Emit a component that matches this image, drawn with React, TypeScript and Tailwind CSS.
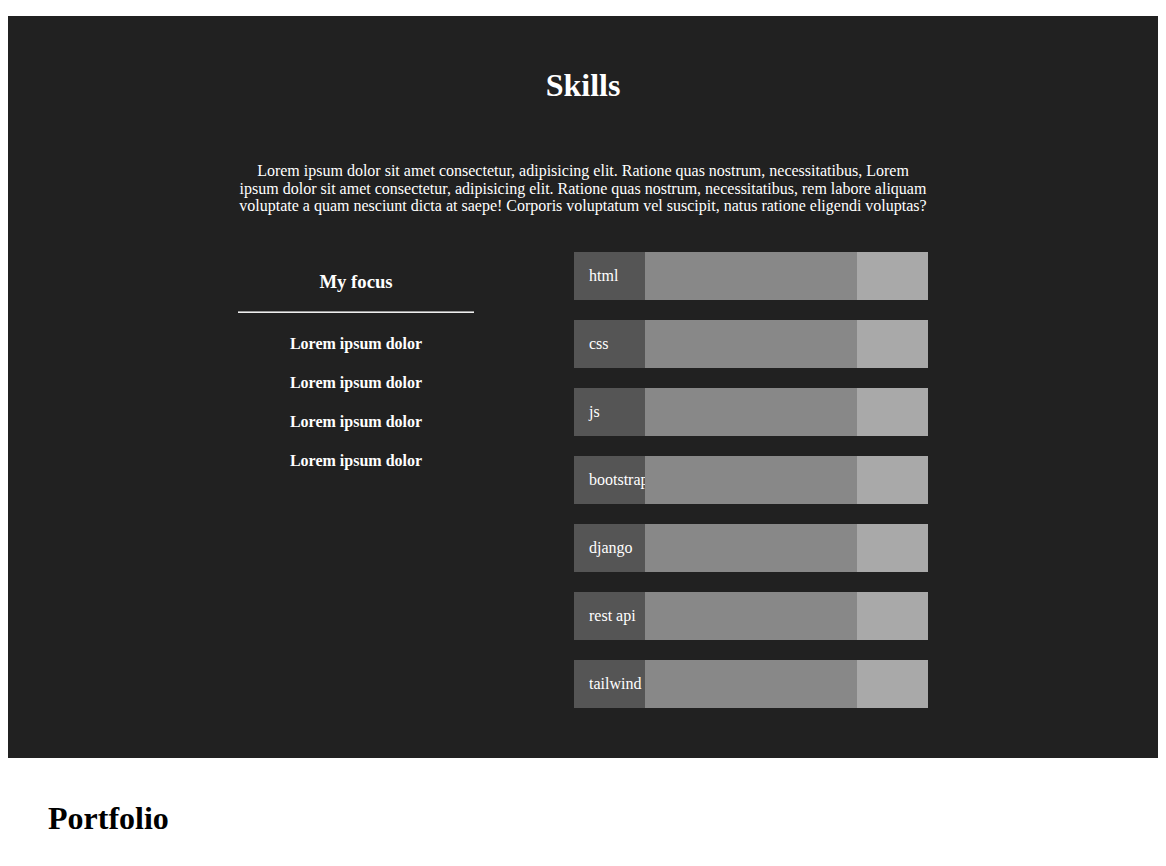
const skills = ["html", "css", "js", "bootstrap", "django", "rest api", "tailwind"];

const focus = ["Lorem ipsum dolor", "Lorem ipsum dolor", "Lorem ipsum dolor", "Lorem ipsum dolor"];

export default function App() {
  return (
    <div className="bg-white min-h-screen pt-4 px-2 font-['Liberation_Serif','Times_New_Roman',serif] text-black">
      <section className="bg-[#212121] text-white pt-[51px] pb-[50px]">
        <h1 className="text-center text-[32px] leading-[37px] font-bold">Skills</h1>
        <div className="w-[690px] mx-auto">
          <p className="mt-[58px] text-center text-[16px] leading-[17.5px]">
            Lorem ipsum dolor sit amet consectetur, adipisicing elit. Ratione quas nostrum, necessitatibus, Lorem
            ipsum dolor sit amet consectetur, adipisicing elit. Ratione quas nostrum, necessitatibus, rem labore aliquam
            voluptate a quam nesciunt dicta at saepe! Corporis voluptatum vel suscipit, natus ratione eligendi voluptas?
          </p>
          <div className="mt-[37px] flex justify-between">
            <div className="w-[236px] flex flex-col items-center">
              <h3 className="mt-[19px] text-[18.72px] leading-[22px] font-bold">My focus</h3>
              <hr className="mt-[18px] w-full border-0 border-t border-b border-t-[#9a9a9a] border-b-[#eeeeee]" />
              <ul className="mt-[22px] flex flex-col gap-[21px]">
                {focus.map((f, i) => (
                  <li key={i} className="text-center text-[16px] leading-[18px] font-bold">
                    {f}
                  </li>
                ))}
              </ul>
            </div>
            <div className="w-[354px] flex flex-col gap-5">
              {skills.map((s) => (
                <div key={s} className="flex h-12">
                  <div className="w-[71px] bg-[#555555] pl-[15px] pt-px flex items-center overflow-hidden whitespace-nowrap text-[16px]">
                    {s}
                  </div>
                  <div className="w-[212px] bg-[#888888]" />
                  <div className="w-[71px] bg-[#a9a9a9]" />
                </div>
              ))}
            </div>
          </div>
        </div>
      </section>
      <h2 className="mt-[42px] pl-10 text-[32px] leading-[37px] font-bold">Portfolio</h2>
    </div>
  );
}
